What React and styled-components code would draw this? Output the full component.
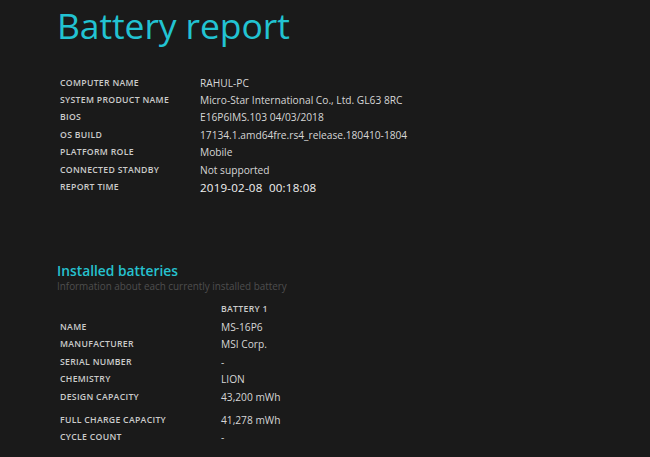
import React from "react";
import styled, { createGlobalStyle } from "styled-components";

const Global = createGlobalStyle`
  html, body { margin: 0; padding: 0; background: #1a1a1a; }
  body { font-family: "Open Sans", "Noto Sans", sans-serif; }
`;

const Page = styled.div`
  width: 650px;
  height: 457px;
  overflow: hidden;
  background: #1a1a1a;
  padding: 0 0 0 57px;
  box-sizing: border-box;
`;

const Title = styled.h1`
  margin: 0;
  font-size: 35.5px;
  font-weight: 400;
  line-height: 50px;
  color: #22c3d2;
  letter-spacing: -0.1px;
`;

const InfoTable = styled.div`
  display: grid;
  grid-template-columns: 140px auto;
  grid-auto-rows: 17.4px;
  margin-top: 24px;
  padding-left: 3px;
  align-items: center;
`;

const Label = styled.div`
  font-size: 8.7px;
  font-weight: 600;
  letter-spacing: 0.3px;
  color: #cbcbcb;
  text-transform: uppercase;
  white-space: nowrap;
`;

const Value = styled.div`
  font-size: ${(p) => (p.$big ? "11.6px" : "10.2px")};
  color: ${(p) => (p.$big ? "#f2f2f2" : "#d6d6d6")};
  letter-spacing: ${(p) => (p.$big ? "0.2px" : "0")};
  white-space: pre;
`;

const SectionTitle = styled.h2`
  margin: 66px 0 0;
  font-size: 13.8px;
  font-weight: 600;
  line-height: 17px;
  color: #26c2cf;
`;

const SectionSub = styled.div`
  font-size: 9.9px;
  line-height: 14px;
  color: #4e4e4e;
`;

const BatteryTable = styled.div`
  display: grid;
  grid-template-columns: 161px auto;
  margin-top: 8px;
  padding-left: 3px;
  align-items: center;
`;

const BRow = styled.div`
  display: contents;
`;

const Cell = styled.div`
  height: 17.5px;
  display: flex;
  align-items: center;
  margin-top: ${(p) => (p.$gap ? "5.5px" : "0")};
`;

const info = [
  ["Computer name", "RAHUL-PC"],
  ["System product name", "Micro-Star International Co., Ltd. GL63 8RC"],
  ["BIOS", "E16P6IMS.103 04/03/2018"],
  ["OS build", "17134.1.amd64fre.rs4_release.180410-1804"],
  ["Platform role", "Mobile"],
  ["Connected standby", "Not supported"],
  ["Report time", "2019-02-08  00:18:08", true],
];

const battery = [
  ["Name", "MS-16P6"],
  ["Manufacturer", "MSI Corp."],
  ["Serial number", "-"],
  ["Chemistry", "LION"],
  ["Design capacity", "43,200 mWh"],
  ["Full charge capacity", "41,278 mWh", true],
  ["Cycle count", "-"],
];

export default function App() {
  return (
    <>
      <Global />
      <Page>
        <Title>Battery report</Title>
        <InfoTable>
          {info.map(([l, v, big]) => (
            <React.Fragment key={l}>
              <Label>{l}</Label>
              <Value $big={big}>{v}</Value>
            </React.Fragment>
          ))}
        </InfoTable>
        <SectionTitle>Installed batteries</SectionTitle>
        <SectionSub>Information about each currently installed battery</SectionSub>
        <BatteryTable>
          <BRow>
            <Cell />
            <Cell>
              <Label>Battery 1</Label>
            </Cell>
          </BRow>
          {battery.map(([l, v, gap]) => (
            <BRow key={l}>
              <Cell $gap={gap}>
                <Label>{l}</Label>
              </Cell>
              <Cell $gap={gap}>
                <Value>{v}</Value>
              </Cell>
            </BRow>
          ))}
        </BatteryTable>
      </Page>
    </>
  );
}
